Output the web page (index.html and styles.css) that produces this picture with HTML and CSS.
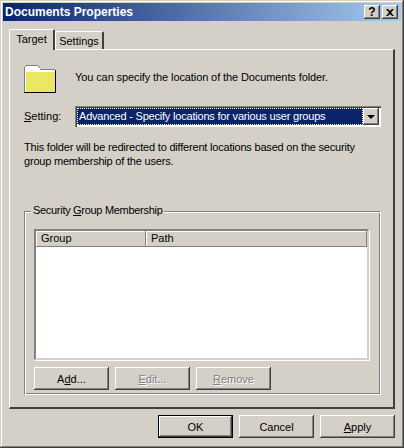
FILE: index.html
```html
<!DOCTYPE html>
<html lang="en">
<head>
  <meta charset="UTF-8" />
  <title>Documents Properties</title>
  <link rel="stylesheet" href="styles.css">
</head>
<body>

<div class="window">
  <div class="titlebar">
    <span class="title">Documents Properties</span>
    <div class="caption-btn help">?</div>
    <div class="caption-btn close">
      <svg width="8" height="7" viewBox="0 0 8 7"><path d="M0 0h2l2 2 2-2h2L5 3.500 8 7H6L4 5 2 7H0l3-3.500z" fill="#000"/></svg>
    </div>
  </div>

  <div class="tabs">
    <div class="tab active">Target</div>
    <div class="tab">Settings</div>
  </div>

  <div class="panel">
    <div class="intro">
      <div class="folder">
        <div class="folder-fill"></div>
        <svg class="folder-lines" width="32" height="28" viewBox="0 0 32 28" shape-rendering="crispEdges">
          <path d="M1 27V2h1V1h12v1h1v1h1v2h15v2H2v20z" fill="#fff"/>
          <path d="M0 27V2h1V1h1V0h12v1h1v1h1v2h15v1H16V3h-1V2h-1V1H2v1H1v25z" fill="#808080"/>
          <path d="M31 5h1v23H0v-1h31z" fill="#000"/>
        </svg>
      </div>
      <p>You can specify the location of the Documents folder.</p>
    </div>

    <div class="setting-row">
      <label><u>S</u>etting:</label>
      <div class="select">
        <div class="select-value"><span>Advanced - Specify locations for various user groups</span></div>
        <div class="select-arrow"><i></i></div>
      </div>
    </div>

    <p class="note">This folder will be redirected to different locations based on the security group membership of the users.</p>

    <div class="groupbox">
      <span class="legend">Security <u>G</u>roup Membership</span>
      <div class="list">
        <div class="list-head">
          <div class="col col-group">Group</div>
          <div class="col col-path">Path</div>
        </div>
        <div class="list-body"></div>
      </div>
      <div class="group-buttons">
        <div class="btn">A<u>d</u>d...</div>
        <div class="btn disabled"><u>E</u>dit...</div>
        <div class="btn disabled"><u>R</u>emove</div>
      </div>
    </div>
  </div>

  <div class="footer">
    <div class="btn default">OK</div>
    <div class="btn">Cancel</div>
    <div class="btn"><u>A</u>pply</div>
  </div>
</div>

</body>
</html>
```

FILE: styles.css
```css
html, body {
  margin: 0;
  padding: 0;
}

body {
  width: 404px;
  height: 448px;
  overflow: hidden;
  font-family: "Liberation Sans", Arial, sans-serif;
  font-size: 11px;
  color: #000;
  background: #d4d0c8;
}

.window {
  box-sizing: border-box;
  width: 404px;
  height: 448px;
  padding: 3px;
  display: flex;
  flex-direction: column;
  background: #d4d0c8;
  box-shadow: inset -1px -1px #404040, inset 1px 1px #d4d0c8, inset -2px -2px #808080, inset 2px 2px #fff;
}

.titlebar {
  height: 18px;
  flex: none;
  display: flex;
  align-items: center;
  padding: 0 3px 0 2px;
  background: linear-gradient(to right, #0a246a, #a6caf0);
}

.title {
  flex: 1;
  color: #fff;
  font-weight: bold;
  font-size: 12px;
}

.caption-btn {
  box-sizing: border-box;
  width: 16px;
  height: 14px;
  margin-left: 2px;
  display: flex;
  align-items: center;
  justify-content: center;
  background: #d4d0c8;
  box-shadow: inset -1px -1px #404040, inset 1px 1px #fff, inset -2px -2px #808080;
  font-weight: bold;
  font-size: 12px;
}

.tabs {
  flex: none;
  display: flex;
  align-items: flex-end;
  height: 20px;
  margin: 8px 6px 0 6px;
}

.tab {
  box-sizing: border-box;
  height: 18px;
  width: 49px;
  display: flex;
  align-items: center;
  justify-content: center;
  padding-top: 1px;
  background: #d4d0c8;
  border-radius: 2px 2px 0 0;
  border-top: 1px solid #fff;
  border-left: 1px solid #fff;
  border-right: 2px solid #404040;
}

.tab.active {
  position: relative;
  z-index: 1;
  width: 46px;
  height: 21px;
  margin-bottom: -1px;
  padding-bottom: 3px;
}

.panel {
  box-sizing: border-box;
  height: 360px;
  margin: 0 6px 0 6px;
  padding: 15px 12px 0 14px;
  border-top: 1px solid #fff;
  border-left: 1px solid #fff;
  border-right: 2px solid #404040;
  border-bottom: 2px solid #404040;
}

.intro {
  display: flex;
  align-items: center;
  height: 28px;
  gap: 19px;
}

.folder {
  position: relative;
  box-sizing: border-box;
  flex: none;
  width: 32px;
  height: 28px;
  padding: 7px 1px 1px 2px;
}

.folder-fill {
  height: 100%;
  background: repeating-conic-gradient(#ffff00 0 25%, #d4d0c8 0 50%) 0 0 / 2px 2px;
}

.folder-lines {
  position: absolute;
  top: 0;
  left: 0;
}

p {
  margin: 0;
}

.intro p {
  padding-bottom: 4px;
  letter-spacing: -0.1px;
}

.setting-row {
  display: flex;
  align-items: center;
  margin-top: 13px;
  height: 21px;
}

.setting-row label {
  width: 51px;
  padding-bottom: 2px;
}

.select {
  box-sizing: border-box;
  width: 306px;
  height: 21px;
  display: flex;
  padding: 2px;
  background: #fff;
  box-shadow: inset 1px 1px #808080, inset 2px 2px #404040, inset -1px -1px #fff;
  border: 0;
}

.select-value {
  flex: 1;
  display: flex;
  min-width: 0;
}

.select-value span {
  flex: 1;
  background: #0a246a;
  color: #fff;
  line-height: 17px;
  padding: 0 2px;
  white-space: nowrap;
  letter-spacing: -0.2px;
  outline: 1px dotted #fff;
  outline-offset: -1px;
}

.select-arrow {
  width: 16px;
  flex: none;
  display: flex;
  align-items: center;
  justify-content: center;
  background: #d4d0c8;
  box-shadow: inset -1px -1px #404040, inset 1px 1px #fff, inset -2px -2px #808080;
}

.select-arrow i {
  width: 0;
  height: 0;
  border-left: 4px solid transparent;
  border-right: 4px solid transparent;
  border-top: 4px solid #000;
}

.note {
  margin-top: 13px;
  line-height: 14px;
  width: 350px;
  letter-spacing: -0.2px;
}

.groupbox {
  position: relative;
  box-sizing: border-box;
  width: 357px;
  height: 184px;
  margin-top: 43px;
  padding: 17px 11px 0 9px;
  border: 1px solid #808080;
  border-right-color: #fff;
  border-bottom-color: #fff;
  box-shadow: inset 1px 1px #fff, inset -1px -1px #808080;
}

.legend {
  position: absolute;
  top: -8px;
  left: 6px;
  padding: 0 2px;
  background: #d4d0c8;
  letter-spacing: -0.3px;
}

.list {
  box-sizing: border-box;
  height: 131px;
  width: 335px;
  display: flex;
  flex-direction: column;
  background: #fff;
  border-top: 2px solid #808080;
  border-left: 2px solid #808080;
  border-right: 2px solid #d4d0c8;
  border-bottom: 2px solid #d4d0c8;
  box-shadow: 1px 1px #fff;
}

.list-head {
  display: flex;
  height: 16px;
  flex: none;
  background: #d4d0c8;
}

.col {
  box-sizing: border-box;
  padding-left: 5px;
  line-height: 15px;
  box-shadow: inset -1px -1px #808080, inset 1px 1px #fff;
}

.col-group {
  width: 110px;
}

.col-path {
  flex: 1;
}

.list-body {
  flex: 1;
}

.group-buttons {
  display: flex;
  gap: 6px;
  margin-top: 7px;
}

.btn {
  box-sizing: border-box;
  width: 75px;
  height: 23px;
  display: flex;
  align-items: center;
  justify-content: center;
  white-space: pre;
  background: #d4d0c8;
  box-shadow: inset -1px -1px #404040, inset 1px 1px #fff, inset -2px -2px #808080;
}

.btn.disabled {
  color: #808080;
  text-shadow: 1px 1px #fff;
}

.btn.default {
  box-shadow: inset 0 0 0 1px #000, inset -2px -2px #404040, inset 2px 2px #fff, inset -3px -3px #808080;
}

.footer {
  display: flex;
  justify-content: flex-end;
  gap: 6px;
  margin: 6px 6px 0 0;
}
```
